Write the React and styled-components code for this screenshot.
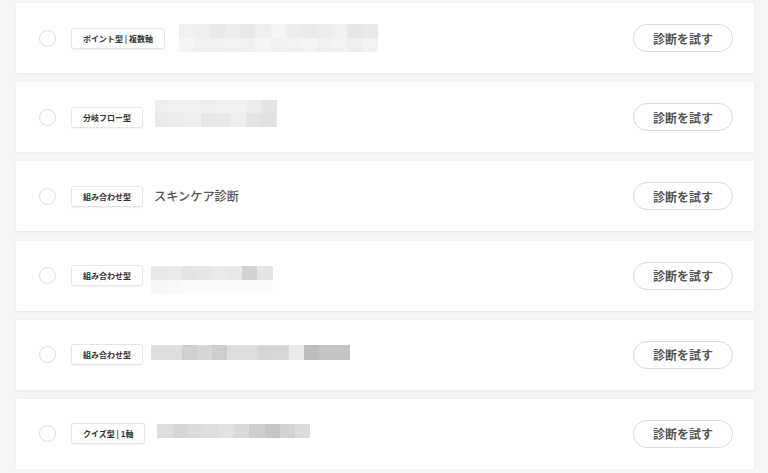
import styled, { createGlobalStyle } from "styled-components";

const GlobalStyle = createGlobalStyle`
  html, body {
    margin: 0;
    padding: 0;
    background: #f4f5f7;
    font-family: "Noto Sans CJK JP", "Noto Sans", sans-serif;
  }
`;

// ぼかし済みタイトル（モザイク）: gap = タグとの間隔, shift = 縦位置の補正
const items = [
  {
    tag: "ポイント型 | 複数軸",
    mosaic: {
      gap: 14,
      shift: 0,
      w: 15.3,
      h: 14,
      rows: [
        [240, 238, 232, 236, 232, 238, 244, 236, 234, 236, 240, 230, 232],
        [244, 240, 240, 242, 240, 244, 240, 242, 244, 240, 242, 238, 242],
      ],
    },
  },
  {
    tag: "分岐フロー型",
    mosaic: {
      gap: 12,
      shift: -4,
      w: 15.2,
      h: 13.5,
      rows: [
        [238, 240, 240, 238, 240, 240, 236, 228],
        [234, 236, 238, 230, 232, 238, 228, 226],
      ],
    },
  },
  { tag: "組み合わせ型", title: "スキンケア診断" },
  {
    tag: "組み合わせ型",
    mosaic: {
      gap: 8,
      shift: 4,
      w: 15.2,
      h: 14,
      rows: [
        [232, 234, 228, 230, 234, 232, 210, 228],
        [248, 250, 252, 252, 252, 252, 252, 252],
      ],
    },
  },
  {
    tag: "組み合わせ型",
    mosaic: {
      gap: 8,
      shift: -2,
      w: 15.3,
      h: 15,
      rows: [[222, 222, 208, 214, 206, 222, 222, 214, 216, 234, 190, 196, 196]],
    },
  },
  {
    tag: "クイズ型 | 1軸",
    mosaic: {
      gap: 12,
      shift: -3,
      w: 15.3,
      h: 14,
      rows: [[222, 214, 220, 222, 226, 218, 206, 198, 210, 220]],
    },
  },
];

export default function App() {
  return (
    <>
      <GlobalStyle />
      <List>
        {items.map((item, i) => (
          <Card key={i}>
            <Radio />
            <Tag>{item.tag}</Tag>
            {item.title ? (
              <Title>{item.title}</Title>
            ) : (
              <Mosaic $gap={item.mosaic.gap} $shift={item.mosaic.shift}>
                {item.mosaic.rows.map((row, r) => (
                  <MosaicRow key={r}>
                    {row.map((tone, c) => (
                      <Cell key={c} $tone={tone} $w={item.mosaic.w} $h={item.mosaic.h} />
                    ))}
                  </MosaicRow>
                ))}
              </Mosaic>
            )}
            <TryButton>診断を試す</TryButton>
          </Card>
        ))}
      </List>
    </>
  );
}

const List = styled.div`
  display: flex;
  flex-direction: column;
  gap: 9.2px;
  padding: 3px 14px 0 16px;
`;

const Card = styled.div`
  display: flex;
  align-items: center;
  height: 70px;
  padding: 0 21px 0 23px;
  background: #fff;
  box-shadow: 0 1px 3px rgb(0 0 0 / 5%);
`;

const Radio = styled.span`
  width: 17px;
  height: 17px;
  box-sizing: border-box;
  border: 1px solid #dcdcdc;
  border-radius: 50%;
  flex-shrink: 0;
  margin-right: 15px;
`;

const Tag = styled.span`
  display: inline-flex;
  align-items: center;
  height: 21px;
  padding: 0 11px;
  box-sizing: border-box;
  border: 1px solid #e6e6e6;
  border-radius: 3px;
  box-shadow: 0 1px 2px rgb(0 0 0 / 6%);
  font-size: 8px;
  font-weight: 700;
  color: #333;
  white-space: nowrap;
`;

const Title = styled.span`
  margin-left: 11px;
  font-size: 12.2px;
  font-weight: 500;
  color: #555;
`;

const Mosaic = styled.div`
  display: flex;
  flex-direction: column;
  margin-left: ${(p) => p.$gap}px;
  transform: translateY(${(p) => p.$shift}px);
`;

const MosaicRow = styled.div`
  display: flex;
`;

const Cell = styled.span`
  width: ${(p) => p.$w}px;
  height: ${(p) => p.$h}px;
  background: rgb(${(p) => p.$tone}, ${(p) => p.$tone}, ${(p) => p.$tone});
`;

const TryButton = styled.button`
  margin-left: auto;
  width: 100px;
  height: 28px;
  box-sizing: border-box;
  border: 1px solid #dadada;
  border-radius: 14px;
  background: #fff;
  font-family: inherit;
  font-size: 12px;
  font-weight: 700;
  color: #555;
  cursor: pointer;
`;
